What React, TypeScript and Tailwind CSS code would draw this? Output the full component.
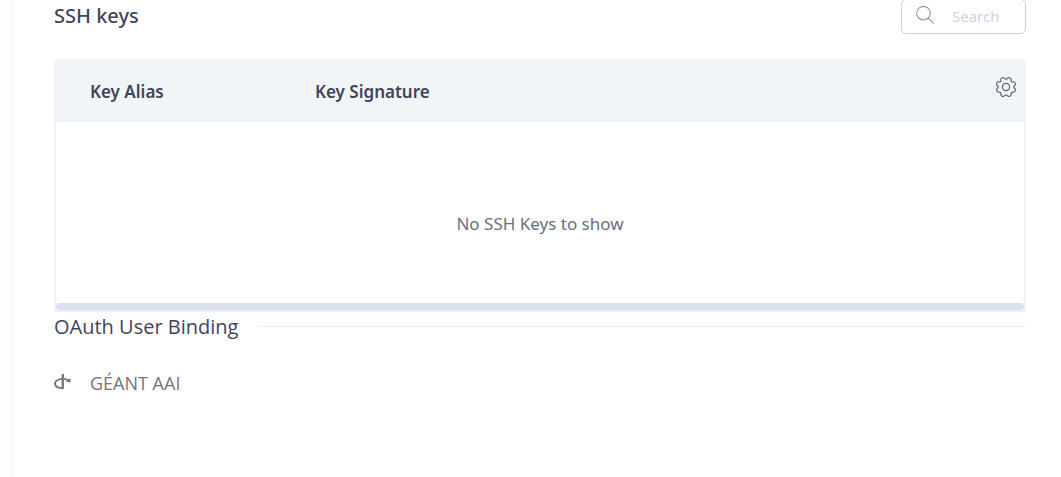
import React from "react";

function SearchIcon() {
  return (
    <svg viewBox="0 0 18 18" className="mb-1 h-[18px] w-[18px] shrink-0" fill="none" stroke="#8c95ac" strokeWidth="1.1" strokeLinecap="round" aria-hidden="true">
      <circle cx="7.5" cy="7.2" r="6.8" />
      <path d="M12.3 12.1 17.3 17.2" />
    </svg>
  );
}

function GearIcon() {
  return (
    <svg viewBox="-10 -10 20 20" className="h-5 w-5" overflow="visible" fill="none" stroke="#5c657a" strokeWidth="1.2" strokeLinejoin="round" aria-hidden="true">
      <path d="M8.9 1.45A2.35 2.35 0 0 1 7.32 5.27A1.5 1.5 0 0 0 5.27 7.32A2.35 2.35 0 0 1 1.45 8.9A1.5 1.5 0 0 0-1.45 8.9A2.35 2.35 0 0 1-5.27 7.32A1.5 1.5 0 0 0-7.32 5.27A2.35 2.35 0 0 1-8.9 1.45A1.5 1.5 0 0 0-8.9-1.45A2.35 2.35 0 0 1-7.32-5.27A1.5 1.5 0 0 0-5.27-7.32A2.35 2.35 0 0 1-1.45-8.9A1.5 1.5 0 0 0 1.45-8.9A2.35 2.35 0 0 1 5.27-7.32A1.5 1.5 0 0 0 7.32-5.27A2.35 2.35 0 0 1 8.9-1.45A1.5 1.5 0 0 0 8.9 1.45Z" />
      <circle r="3.6" />
    </svg>
  );
}

function OpenIdIcon() {
  return (
    <svg viewBox="0 0 17 16" className="mb-0.5 h-4 w-[17px] shrink-0" fill="none" stroke="#757575" aria-hidden="true">
      <path d="M8.8 0V15" strokeWidth="2.3" />
      <path d="M9 14.2C4.6 14.2 1 12.6 1 9.6S4 5.4 8 4.9" strokeWidth="1.9" />
      <path d="M10 4.9C11.8 5.1 13 5.5 14.2 6.3" strokeWidth="1.7" />
      <path d="M16.2 4.2 16.8 8.6 11.6 7.5Z" fill="#757575" stroke="none" />
    </svg>
  );
}

export default function App() {
  return (
    <div className="flex min-h-screen bg-white font-['Open_Sans',sans-serif] text-[#3f455a]">
      <div className="w-3.5 shrink-0 bg-linear-to-r from-white from-30% to-[#f9f9f9]" />
      <main className="min-w-0 flex-1 pr-[35px] pl-10">
        <header className="flex items-start justify-between">
          <h2 className="pt-0.5 font-['Noto_Sans',sans-serif] text-[20px] leading-7 font-medium">SSH keys</h2>
          <label className="-mt-px flex h-[35px] w-[125px] items-center gap-[18px] rounded-[5px] border border-[#ccd1e2] pl-3.5">
            <SearchIcon />
            <input type="text" aria-label="Search" placeholder="Search" className="w-full min-w-0 bg-transparent text-[15px] outline-none placeholder:text-[#ccd1e8]" />
          </label>
        </header>

        <section className="mt-[25px] overflow-hidden rounded-t-[5px] border-2 border-[#f0f1f8] border-t-[#f1f5f8]">
          <table className="w-full table-fixed border-collapse font-['Noto_Sans',sans-serif]">
            <thead className="bg-[#f1f5f8]">
              <tr className="h-[61px] text-left text-[17px]">
                <th className="w-[225px] pl-[34px] font-semibold">Key Alias</th>
                <th className="pl-[34px] font-semibold">Key Signature</th>
                <th className="w-12 pt-2 pr-2 text-right align-top">
                  <button type="button" aria-label="Table settings" className="mt-2 inline-flex">
                    <GearIcon />
                  </button>
                </th>
              </tr>
            </thead>
            <tbody>
              <tr className="h-[181px]">
                <td colSpan={3} className="pt-[22px] text-center text-[17px] text-[#687084]">
                  No SSH Keys to show
                </td>
              </tr>
            </tbody>
          </table>
          <div className="h-[7px] rounded-full bg-[#dde1ee]" />
        </section>

        <div className="flex items-center gap-5">
          <h2 className="text-[20px] leading-[30px]">OAuth User Binding</h2>
          <hr className="mb-0.5 flex-1 border-[#f0f1f8]" />
        </div>
        <a href="#" className="mt-[27px] inline-flex items-center gap-[19px] text-[18px] leading-7 text-[#757575]">
          <OpenIdIcon />
          GÉANT AAI
        </a>
      </main>
    </div>
  );
}
